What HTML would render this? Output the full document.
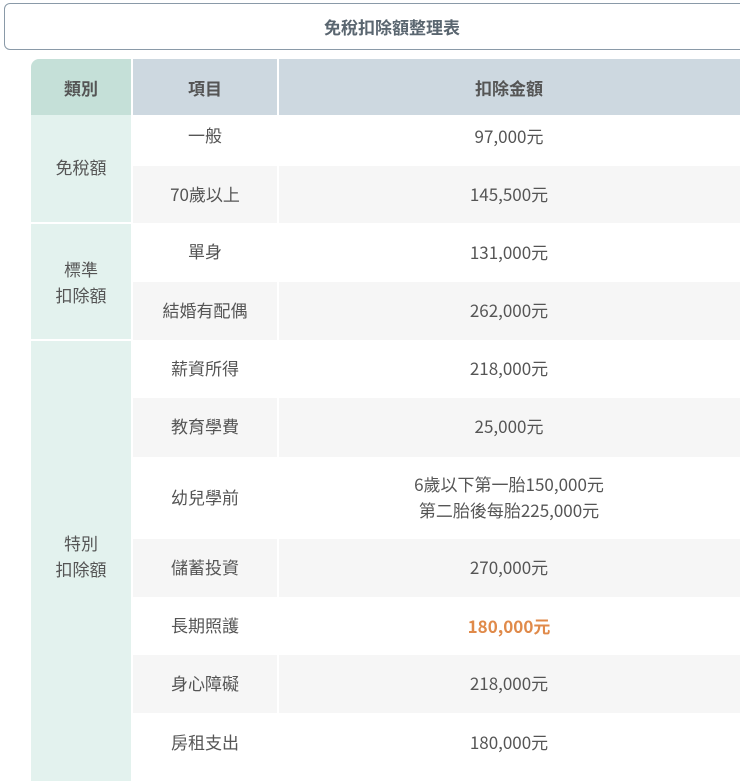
<!DOCTYPE html>
<html><head><meta charset="utf-8"><style>
body{margin:0;width:740px;height:774px;overflow:hidden;background:#fff;font-family:"Noto Sans CJK TC","Liberation Sans",sans-serif;color:#555;font-size:17px}
.t{position:absolute;left:4px;top:3px;width:760px;height:47px;border:1px solid #8a9aa8;border-radius:6px;box-sizing:border-box}
.t span{position:absolute;left:319px;top:10px;font-weight:bold;color:#5a6670;font-size:17px}
.c{position:absolute;display:flex;align-items:center;justify-content:center;text-align:center;line-height:26px}
.h{font-weight:bold;color:#555}
</style></head><body>
<div class="t"><span>免稅扣除額整理表</span></div>
<div class="c h" style="left:31px;top:59px;width:100px;height:56px;background:#c5e0d8;border-top-left-radius:8px;padding-top:2px;box-sizing:border-box">類別</div>
<div class="c h" style="left:133px;top:59px;width:144px;height:56px;background:#cdd8e0;padding-top:2px;box-sizing:border-box">項目</div>
<div class="c h" style="left:279px;top:59px;width:470px;height:56px;background:#cdd8e0;padding:2px 10px 0 0;box-sizing:border-box">扣除金額</div>

<div class="c" style="left:31px;top:115px;width:100px;height:107px;background:#e3f2ee;align-items:flex-start;padding-top:39px;box-sizing:border-box">免稅額</div>
<div class="c" style="left:31px;top:224px;width:100px;height:115px;background:#e3f2ee;align-items:flex-start;padding-top:32px;box-sizing:border-box">標準<br>扣除額</div>
<div class="c" style="left:31px;top:341px;width:100px;height:440px;background:#e3f2ee;align-items:flex-start;padding-top:189px;box-sizing:border-box">特別<br>扣除額</div>

<div style="position:absolute;left:133px;top:115px;width:620px">
<div style="position:relative;height:51px;background:#fff"><div class="c" style="left:0;top:0;width:144px;height:40px">一般</div><div class="c" style="left:146px;top:0;width:460px;height:42px">97,000元</div></div>
<div style="position:relative;height:57px;background:#f6f6f6"><div class="c" style="left:0;top:0;width:144px;height:55px">70歲以上</div><div class="c" style="left:146px;top:0;width:460px;height:55px">145,500元</div><div style="position:absolute;left:144px;top:0;width:2px;height:57px;background:#fff"></div></div>
<div style="position:relative;height:59px;background:#fff"><div class="c" style="left:0;top:0;width:144px;height:55px">單身</div><div class="c" style="left:146px;top:0;width:460px;height:57px">131,000元</div></div>
<div style="position:relative;height:58px;background:#f6f6f6"><div class="c" style="left:0;top:0;width:144px;height:56px">結婚有配偶</div><div class="c" style="left:146px;top:0;width:460px;height:56px">262,000元</div><div style="position:absolute;left:144px;top:0;width:2px;height:58px;background:#fff"></div></div>
<div style="position:relative;height:58px;background:#fff"><div class="c" style="left:0;top:0;width:144px;height:56px">薪資所得</div><div class="c" style="left:146px;top:0;width:460px;height:56px">218,000元</div></div>
<div style="position:relative;height:59px;background:#f6f6f6"><div class="c" style="left:0;top:0;width:144px;height:56px">教育學費</div><div class="c" style="left:146px;top:0;width:460px;height:56px">25,000元</div><div style="position:absolute;left:144px;top:0;width:2px;height:59px;background:#fff"></div></div>
<div style="position:relative;height:82px;background:#fff"><div class="c" style="left:0;top:0;width:144px;height:80px">幼兒學前</div><div class="c" style="left:146px;top:0;width:460px;height:80px">6歲以下第一胎150,000元<br>第二胎後每胎225,000元</div></div>
<div style="position:relative;height:58px;background:#f6f6f6"><div class="c" style="left:0;top:0;width:144px;height:56px">儲蓄投資</div><div class="c" style="left:146px;top:0;width:460px;height:56px">270,000元</div><div style="position:absolute;left:144px;top:0;width:2px;height:58px;background:#fff"></div></div>
<div style="position:relative;height:58px;background:#fff"><div class="c" style="left:0;top:0;width:144px;height:56px">長期照護</div><div class="c" style="left:146px;top:0;width:460px;height:58px;color:#e08a4a;font-weight:bold">180,000元</div></div>
<div style="position:relative;height:58px;background:#f6f6f6"><div class="c" style="left:0;top:0;width:144px;height:56px">身心障礙</div><div class="c" style="left:146px;top:0;width:460px;height:56px">218,000元</div><div style="position:absolute;left:144px;top:0;width:2px;height:58px;background:#fff"></div></div>
<div style="position:relative;height:62px;background:#fff"><div class="c" style="left:0;top:0;width:144px;height:58px">房租支出</div><div class="c" style="left:146px;top:0;width:460px;height:58px">180,000元</div></div>
</div>
</body></html>
